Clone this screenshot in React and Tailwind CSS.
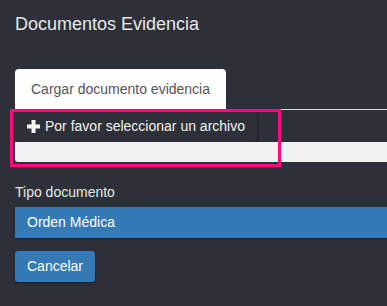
export default function App() {
  return (
    <div className="relative w-[387px] h-[306px] overflow-hidden bg-[#2e3039] font-['Liberation_Sans',Arial,sans-serif]">
      <div className="w-[430px] pl-[15px]">
        <h2 className="pt-[14px] text-[18px] leading-[20px] text-[#e8e8e8]">Documentos Evidencia</h2>

        <div className="mt-[35px] flex border-b border-[#dddddd]">
          <div className="h-[41px] -mb-px flex items-center px-[16px] bg-white rounded-t-[4px] text-[14px] text-[#555555]">
            Cargar documento evidencia
          </div>
        </div>

        <div className="mt-[1px]">
          <button className="h-[31px] w-[242px] flex items-center gap-[5px] pl-[12px] bg-[#2e3039] text-[14px] text-[#f2f2f2] shadow-[1px_1px_2px_rgba(0,0,0,0.45)] rounded-[3px]">
            <svg width="13" height="13" viewBox="0 0 13 13">
              <path d="M4.5 0h4v4.5H13v4H8.5V13h-4V8.5H0v-4h4.5z" fill="#f5f5f5" />
            </svg>
            Por favor seleccionar un archivo
          </button>
          <div className="h-[20px] bg-[#f2f2f2] rounded-b-[3px]"></div>
        </div>

        <div className="mt-[20px] text-[14px] leading-[20px] text-[#e6e6e6]">Tipo documento</div>

        <div className="mt-[5px] h-[31px] flex items-center pl-[12px] bg-[#337ab7] text-[14px] text-white shadow-[0_1px_2px_rgba(0,0,0,0.4)]">
          Orden Médica
        </div>

        <button className="mt-[13px] h-[31px] w-[80px] flex items-center pl-[12px] bg-[#337ab7] text-[14px] text-white rounded-[3px] shadow-[0_1px_2px_rgba(0,0,0,0.4)]">
          Cancelar
        </button>
      </div>

      <div className="absolute left-[10px] top-[109px] w-[271px] h-[58px] border-[3px] border-[#ff0a80]"></div>
    </div>
  );
}
